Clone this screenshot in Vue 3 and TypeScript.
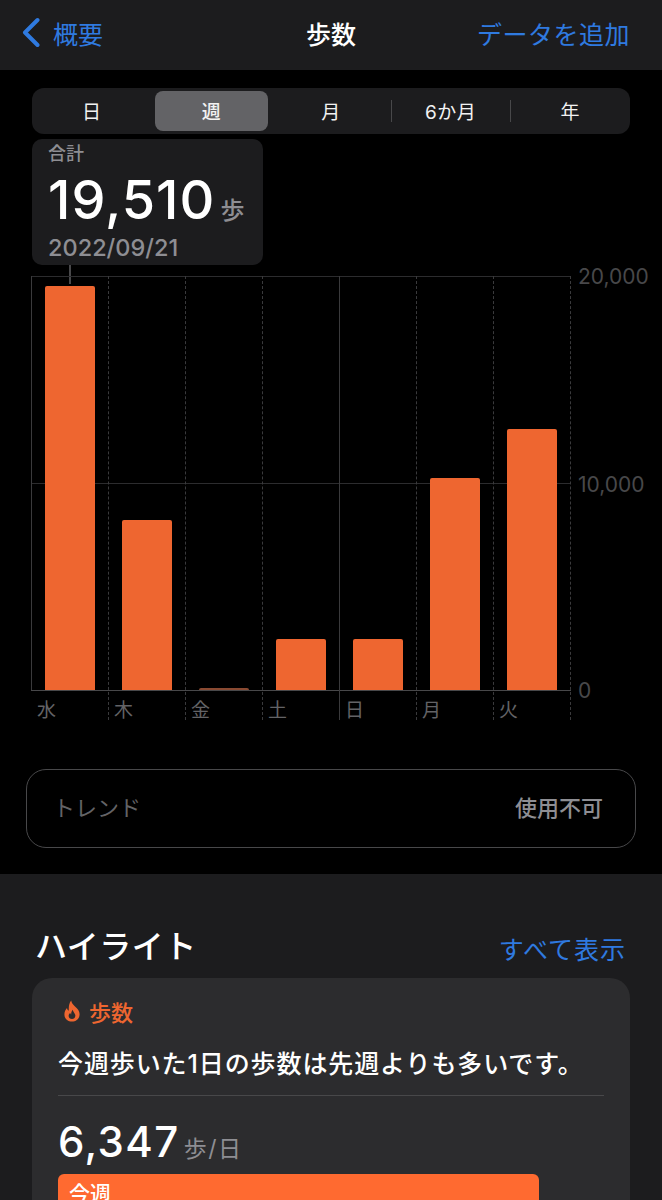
<script setup lang="ts">
interface Day {
  label: string
  height: number
  divider?: boolean
}

const days: Day[] = [
  { label: '水', height: 404 },
  { label: '木', height: 170 },
  { label: '金', height: 2 },
  { label: '土', height: 51 },
  { label: '日', height: 51, divider: true },
  { label: '月', height: 212 },
  { label: '火', height: 261 }
]

const segments = ['日', '週', '月', '6か月', '年']
const activeSegment = 1
</script>

<template>
  <div class="page">
    <header class="nav">
      <div class="nav__back">
        <svg class="nav__chevron" viewBox="0 0 20 32" fill="none">
          <path d="M17.5 3L5 15.5L17.5 28" stroke="currentColor" stroke-width="4" stroke-linecap="round" stroke-linejoin="round"/>
        </svg>
        <span>概要</span>
      </div>
      <h1 class="nav__title">歩数</h1>
      <span class="nav__action">データを追加</span>
    </header>

    <main class="main">
      <div class="segments">
        <div
          v-for="(seg, i) in segments"
          :key="seg"
          class="segments__item"
          :class="{
            'segments__item--active': i === activeSegment,
            'segments__item--rule': i >= 3
          }"
        ><span class="segments__label">{{ seg }}</span></div>
      </div>

      <div class="total">
        <div class="total__label">合計</div>
        <div class="total__value">19,510<span class="total__unit">歩</span></div>
        <div class="total__date">2022/09/21</div>
      </div>

      <section class="chart">
        <div class="chart__connector"></div>
        <div class="chart__line chart__line--top"></div>
        <div class="chart__line chart__line--mid"></div>
        <div class="chart__line chart__line--bottom"></div>
        <div
          v-for="(day, i) in days"
          :key="day.label"
          class="day"
          :class="{ 'day--divider': day.divider, 'day--first': i === 0 }"
        >
          <div class="day__plot">
            <div class="day__bar" :class="{ 'day__bar--empty': day.height < 5 }" :style="{ height: day.height + 'px' }"></div>
          </div>
          <div class="day__label">{{ day.label }}</div>
        </div>
        <div class="chart__end">
          <span class="chart__tick chart__tick--top">20,000</span>
          <span class="chart__tick chart__tick--mid">10,000</span>
          <span class="chart__tick chart__tick--bottom">0</span>
        </div>
      </section>

      <div class="trend">
        <span>トレンド</span>
        <span class="trend__value">使用不可</span>
      </div>
    </main>

    <section class="sheet">
      <div class="sheet__head">
        <h2 class="sheet__title">ハイライト</h2>
        <span class="sheet__link">すべて表示</span>
      </div>

      <div class="card">
        <div class="card__tag">
          <svg class="card__flame" viewBox="0 0 16 22">
            <path fill-rule="evenodd" d="M7.2 0.6C7.6 3.4 9 4.6 11 6.4C13.7 8.8 15.6 11 15.6 14.2C15.6 18.6 12.4 21.6 8 21.6C3.6 21.6 0.4 18.6 0.4 14.4C0.4 11.6 1.6 9.6 3 8C3.2 9.4 3.8 10.2 4.8 10.8C4.6 7 5 3.2 7.2 0.6ZM8.8 9.8C8.9 11.6 10.6 12.8 11.2 14.8C11.8 17 10.2 19 8 19C5.9 19 4.4 17.4 4.7 15.4C4.9 14.2 5.6 13.4 6.3 13C6.4 13.8 6.7 14.2 7.2 14.4C7.1 12.6 7.6 11 8.8 9.8Z" fill="currentColor"/>
          </svg>
          <span>歩数</span>
        </div>
        <p class="card__text">今週歩いた1日の歩数は先週よりも多いです。</p>
        <div class="card__rule"></div>
        <div class="card__value">6,347<span class="card__unit">歩/日</span></div>
        <div class="card__bar">今週</div>
      </div>
    </section>
  </div>
</template>

<style scoped>
.page {
  height: 1200px;
  overflow: hidden;
  background: #000;
  color: #fff;
  font-family: Inter, "Noto Sans CJK JP", sans-serif;
}

/* Nav */
.nav {
  display: grid;
  grid-template-columns: 1fr auto 1fr;
  align-items: center;
  height: 70px;
  padding: 0 20px 4px;
  box-sizing: border-box;
  background: #1c1c1e;
  color: #2f7ae0;
  font-size: 25px;
}

.nav__back {
  display: flex;
  align-items: center;
  gap: 13px;
}

.nav__chevron {
  width: 20px;
  height: 32px;
}

.nav__title {
  margin: 0;
  color: #fff;
  font-size: 25px;
  font-weight: 500;
}

.nav__action {
  justify-self: end;
  margin-right: 12px;
  letter-spacing: 0.5px;
}

/* Segmented control */
.main {
  height: 804px;
  padding: 18px 32px 0;
  box-sizing: border-box;
}

.segments {
  display: grid;
  grid-template-columns: repeat(5, 1fr);
  height: 46px;
  padding: 3px 0;
  box-sizing: border-box;
  border-radius: 12px;
  background: #1c1c1e;
}

.segments__item {
  position: relative;
  display: flex;
  align-items: center;
  justify-content: center;
  margin: 0 3px;
  border-radius: 8px;
  color: #f2f2f2;
  font-size: 19px;
}

.segments__label {
  position: relative;
  top: -1px;
  letter-spacing: 0.5px;
}

.segments__item--active {
  background: #636366;
  font-weight: 500;
}

.segments__item--rule::before {
  content: "";
  position: absolute;
  left: -3px;
  top: 9px;
  bottom: 9px;
  width: 1px;
  background: #48484a;
}

/* Total */
.total {
  width: 231px;
  height: 126px;
  margin-top: 5px;
  padding: 2px 0 0 16px;
  box-sizing: border-box;
  border-radius: 10px;
  background: #1c1c1e;
}

.total__label {
  color: #8e8e93;
  font-size: 18px;
  font-weight: 500;
  line-height: 26px;
}

.total__value {
  font-size: 54px;
  font-weight: 500;
  line-height: 66px;
  letter-spacing: 1px;
  white-space: nowrap;
}

.total__unit {
  margin-left: 5px;
  color: #8e8e93;
  font-size: 24px;
  font-weight: 500;
  line-height: 1;
  letter-spacing: 0;
}

.total__date {
  color: #8e8e93;
  font-size: 23.5px;
  font-weight: 500;
  line-height: 30px;
}

/* Chart */
.chart {
  position: relative;
  display: flex;
  width: 540px;
  margin: 11px 0 0 -1px;
}

.chart__connector {
  position: absolute;
  left: 38px;
  top: -11px;
  width: 2px;
  height: 19px;
  background: #48484a;
}

.chart__line {
  position: absolute;
  left: 0;
  width: 540px;
  height: 1px;
  background: #2c2c2e;
}

.chart__line--top { top: 0; }
.chart__line--mid { top: 207px; }
.chart__line--bottom { top: 414px; background: #48484a; }

.day {
  position: relative;
  width: 77px;
  height: 444px;
  box-sizing: border-box;
  border-left: 1px dashed #3a3a3c;
}

.day--divider {
  border-left: 1px solid #3a3a3c;
}

/* the first axis stops at the baseline, so its label has nothing to its left */
.day--first {
  border-left-color: transparent;
}

.day--first::before {
  content: "";
  position: absolute;
  left: -1px;
  top: 0;
  width: 1px;
  height: 414px;
  background: #3a3a3c;
}

.day__plot {
  display: flex;
  align-items: flex-end;
  height: 414px;
  padding-left: 13px;
  box-sizing: border-box;
}

.day__bar {
  position: relative;
  width: 50px;
  border-radius: 2px 2px 0 0;
  background: #ee6630;
}

.day__bar--empty {
  background: #8a4a32;
}

.day__label {
  position: relative;
  padding: 8px 0 0 5px;
  color: #636366;
  font-size: 19px;
  line-height: 26px;
}

.chart__end {
  position: relative;
  height: 444px;
  border-left: 1px dashed #3a3a3c;
}

.chart__tick {
  position: absolute;
  left: 7px;
  color: #48484a;
  font-size: 21px;
  line-height: 24px;
}

.chart__tick--top { top: -11px; }
.chart__tick--mid { top: 197px; }
.chart__tick--bottom { top: 403px; }

/* Trend */
.trend {
  display: flex;
  align-items: center;
  justify-content: space-between;
  height: 79px;
  margin: 49px -6px 0;
  padding: 0 32px 5px 26px;
  box-sizing: border-box;
  border: 1px solid #48484a;
  border-radius: 20px;
  color: #636366;
  font-size: 22px;
}

.trend__value {
  color: #8e8e93;
  font-weight: 500;
}

/* Highlights */
.sheet {
  height: 326px;
  padding: 0 32px;
  box-sizing: border-box;
  background: #1c1c1e;
}

.sheet__head {
  display: flex;
  align-items: center;
  justify-content: space-between;
  height: 104px;
  padding: 36px 4px 0 3px;
  box-sizing: border-box;
}

.sheet__title {
  margin: 0;
  font-size: 32px;
  font-weight: 500;
  letter-spacing: 0.5px;
}

.sheet__link {
  margin-top: 7px;
  color: #2f7ae0;
  font-size: 25px;
  letter-spacing: 1px;
}

.card {
  height: 300px;
  padding: 17px 26px 0;
  box-sizing: border-box;
  border-radius: 20px;
  background: #2c2c2e;
}

.card__tag {
  display: flex;
  align-items: center;
  gap: 9px;
  height: 32px;
  padding-left: 6px;
  color: #ee6630;
  font-size: 22px;
  font-weight: 500;
}

.card__flame {
  width: 16px;
  height: 24px;
}

.card__text {
  margin: 19px 0 0;
  font-size: 25px;
  font-weight: 500;
  line-height: 36px;
  letter-spacing: 0.9px;
}

.card__rule {
  height: 1px;
  margin-top: 13px;
  background: #48484a;
}

.card__value {
  margin-top: 14px;
  font-size: 42px;
  font-weight: 500;
  line-height: 64px;
  letter-spacing: 1.4px;
}

.card__unit {
  margin-left: 4px;
  color: #8e8e93;
  font-size: 23px;
  font-weight: 400;
  line-height: 1;
  letter-spacing: 1.5px;
}

.card__bar {
  width: 481px;
  height: 44px;
  padding: 3px 11px;
  box-sizing: border-box;
  border-radius: 6px;
  background: #ff6a30;
  font-size: 21px;
  font-weight: 500;
}
</style>
